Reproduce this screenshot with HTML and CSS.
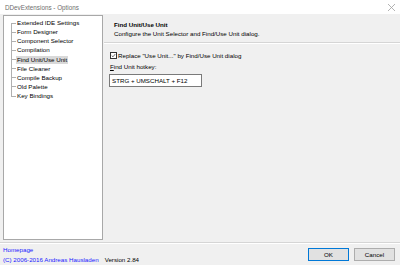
FILE: index.html
```html
<!DOCTYPE html>
<html lang="en">
<head>
    <meta charset="UTF-8">
    <title>DDevExtensions - Options</title>
    <link rel="stylesheet" href="styles.css">
</head>
<body>

<div class="window">
    <div class="titlebar">
        <span class="title">DDevExtensions - Options</span>
        <svg class="close" width="9" height="9" viewBox="0 0 9 9">
            <path d="M1 1L8 8M8 1L1 8" stroke="#a0a0a0" stroke-width="0.8" fill="none"/>
        </svg>
    </div>

    <div class="main">
        <div class="tree">
            <ul class="tree-list">
                <li><span>Extended IDE Settings</span></li>
                <li><span>Form Designer</span></li>
                <li><span>Component Selector</span></li>
                <li><span>Compilation</span></li>
                <li class="selected"><span>Find Unit/Use Unit</span></li>
                <li><span>File Cleaner</span></li>
                <li><span>Compile Backup</span></li>
                <li><span>Old Palette</span></li>
                <li><span>Key Bindings</span></li>
            </ul>
        </div>

        <div class="page">
            <div class="page-header">
                <div class="page-title">Find Unit/Use Unit</div>
                <div class="page-desc">Configure the Unit Selector and Find/Use Unit dialog.</div>
            </div>
            <div class="separator"></div>

            <div class="page-body">
                <label class="check-row">
                    <span class="checkbox">
                        <svg width="7" height="7" viewBox="0 0 7 7">
                            <path d="M1 3.6L2.8 5.4L6 1.4" stroke="#222" stroke-width="0.9" fill="none"/>
                        </svg>
                    </span>
                    Replace "Use Unit..." by Find/Use Unit dialog
                </label>
                <div class="field-label"><u>F</u>ind Unit hotkey:</div>
                <div class="edit">STRG + UMSCHALT + F12</div>
            </div>
        </div>
    </div>

    <div class="separator full"></div>

    <div class="footer">
        <div class="about">
            <a class="link" href="#">Homepage</a>
            <div class="about-row">
                <a class="link" href="#">(C) 2006-2016 Andreas Hausladen</a>
                <span class="version">Version 2.84</span>
            </div>
        </div>
        <div class="buttons">
            <button class="btn default">OK</button>
            <button class="btn">Cancel</button>
        </div>
    </div>
</div>

</body>
</html>
```

FILE: styles.css
```css
body {
    margin: 0;
    padding: 0;
    font-family: "Liberation Sans", Arial, sans-serif;
    font-size: 6.2px;
    color: #000;
    background-color: #f0f0f0;
}
.window {
    width: 400px;
    height: 265px;
    display: flex;
    flex-direction: column;
    overflow: hidden;
}
.titlebar {
    height: 14px;
    background-color: #fff;
    display: flex;
    align-items: center;
    justify-content: space-between;
    padding: 0 4px 0 5px;
    flex-shrink: 0;
}
.title {
    color: #6e6e6e;
    font-size: 6.3px;
}
.main {
    height: 228px;
    display: flex;
    flex-shrink: 0;
}
.tree {
    width: 98px;
    margin: 1px 0 2px 3px;
    background-color: #fff;
    border: 1px solid #a8a8a8;
}
.tree-list {
    list-style: none;
    margin: 0;
    padding: 2px 0 0 0;
}
.tree-list li {
    position: relative;
    height: 9.15px;
    line-height: 9.15px;
    padding-left: 12px;
}
.tree-list li::before {
    content: "";
    position: absolute;
    left: 7px;
    top: 4.5px;
    width: 5px;
    border-top: 1px solid #b0b0b0;
}
.tree-list li::after {
    content: "";
    position: absolute;
    left: 7px;
    top: 0;
    height: 100%;
    border-left: 1px solid #b0b0b0;
}
.tree-list li:first-child::after {
    top: 4.5px;
    height: 4.65px;
}
.tree-list li:last-child::after {
    height: 4.5px;
}
.tree-list li span {
    padding: 0 1px;
    display: inline-block;
    line-height: 8px;
}
.tree-list li.selected span {
    background-color: #d9d9d9;
}
.page {
    flex: 1;
    display: flex;
    flex-direction: column;
}
.page-header {
    height: 28px;
    padding: 6px 0 0 11px;
    box-sizing: border-box;
}
.page-title {
    font-weight: bold;
    line-height: 9px;
}
.page-desc {
    line-height: 9px;
}
.separator {
    height: 1px;
    background-color: #d5d5d5;
    border-bottom: 1px solid #fff;
    margin-left: 1px;
}
.separator.full {
    margin-left: 0;
    flex-shrink: 0;
}
.page-body {
    padding: 7px 0 0 7px;
}
.check-row {
    display: flex;
    align-items: center;
    height: 9px;
}
.checkbox {
    width: 7px;
    height: 7px;
    box-sizing: border-box;
    border: 1px solid #333;
    background-color: #fff;
    margin-right: 1px;
    display: flex;
    align-items: center;
    justify-content: center;
}
.checkbox svg {
    display: block;
}
.field-label {
    margin-top: 3px;
    line-height: 8px;
}
.edit {
    width: 93px;
    height: 13px;
    box-sizing: border-box;
    margin: 3px 0 0 -1px;
    border: 1px solid #7a7a7a;
    background-color: #fff;
    padding-left: 2px;
    line-height: 11px;
}
.footer {
    flex: 1;
    display: flex;
    justify-content: space-between;
    padding: 1px 5px 0 3px;
}
.about {
    display: flex;
    flex-direction: column;
    line-height: 10px;
}
.about-row {
    display: flex;
    gap: 6px;
}
.link {
    color: #1a1aff;
    text-decoration: none;
}
.buttons {
    display: flex;
    gap: 5px;
    padding-top: 3px;
}
.btn {
    width: 41px;
    height: 13px;
    padding: 0;
    font-family: inherit;
    font-size: 6.2px;
    background-color: #e1e1e1;
    border: 1px solid #adadad;
    color: #000;
}
.btn.default {
    border-color: #0078d7;
}
```
